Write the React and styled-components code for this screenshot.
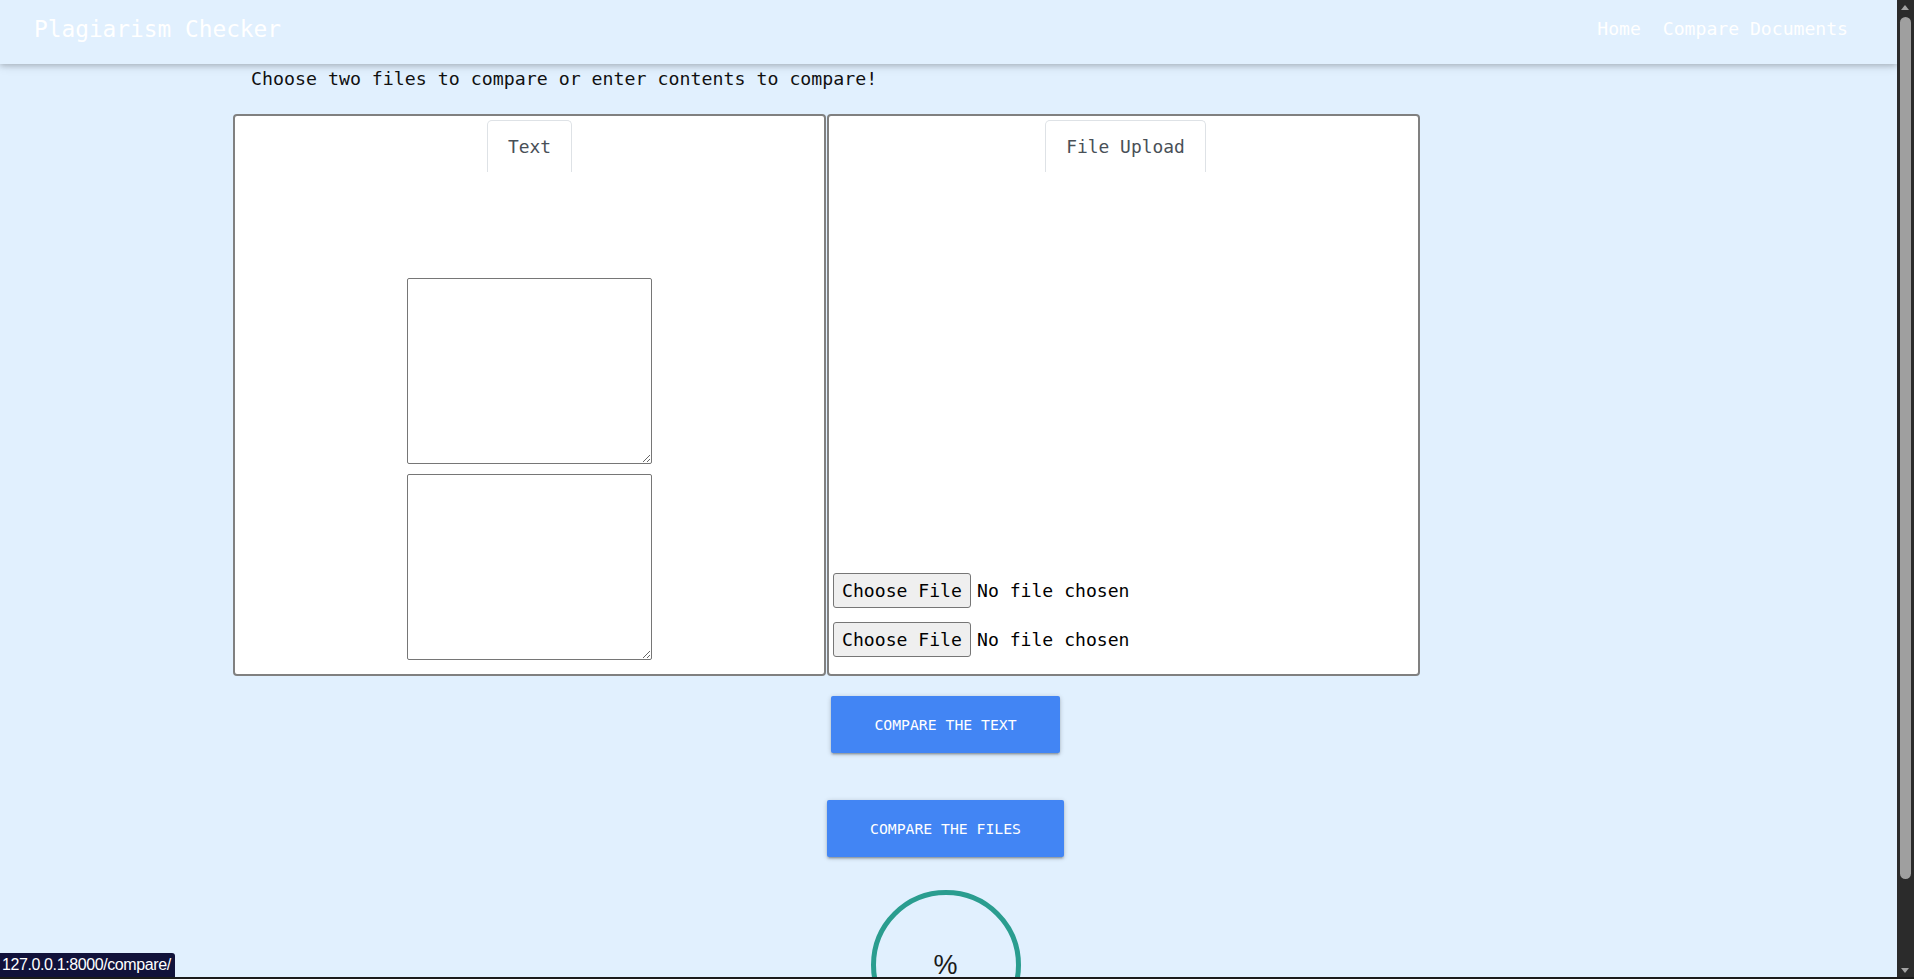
import React from 'react';
import styled, { createGlobalStyle } from 'styled-components';

const GlobalStyle = createGlobalStyle`
    body {
        margin: 0 17px 0 0;
        background: #e1f0fe;
        font-family: "DejaVu Sans Mono", "Liberation Mono", monospace;
        color: #111;
    }
`;

function App() {
    return (
        <>
            <GlobalStyle />
            <Header>
                <Brand>Plagiarism Checker</Brand>
                <Nav>
                    <NavLink href="#">Home</NavLink>
                    <NavLink href="#">Compare Documents</NavLink>
                </Nav>
            </Header>

            <Intro>Choose two files to compare or enter contents to compare!</Intro>

            <Workspace>
                <Panel>
                    <Tab>Text</Tab>
                    <TextBox first />
                    <TextBox />
                </Panel>
                <Panel upload>
                    <Tab>File Upload</Tab>
                    <Spacer />
                    <FileInput type="file" />
                    <FileInput type="file" />
                </Panel>
            </Workspace>

            <Actions>
                <ActionButton>Compare the text</ActionButton>
                <ActionButton>Compare the files</ActionButton>
                <Score>
                    <Percent>%</Percent>
                </Score>
            </Actions>

            {/* browser chrome seen in the screenshot */}
            <ScrollTrack>
                <Arrow up />
                <Thumb />
                <Spacer />
                <Arrow />
            </ScrollTrack>
            <StatusBar>127.0.0.1:8000/compare/</StatusBar>
            <WindowEdge />
        </>
    )
}

export default App

const Header = styled.header`
    position: relative;
    z-index: 1;
    height: 64px;
    box-sizing: border-box;
    padding: 0 49px 0 34px;
    display: flex;
    justify-content: space-between;
    align-items: flex-start;
    background: #e1f0fe;
    box-shadow: 0 2px 5px 0 rgba(0,0,0,.16), 0 2px 10px 0 rgba(0,0,0,.12);
`

const Brand = styled.div`
    margin-top: 16px;
    font-size: 22.8px;
    color: #fff;
`

const Nav = styled.nav`
    margin-top: 18px;
    display: flex;
    gap: 22px;
`

const NavLink = styled.a`
    font-size: 18.1px;
    color: #fff;
    text-decoration: none;
`

const Intro = styled.p`
    margin: 4px 0 24px 251px;
    font-size: 18.25px;
    line-height: 22px;
    color: #111;
`

const Workspace = styled.div`
    display: flex;
    gap: 1px;
    margin-left: 233px;
`

const Panel = styled.section`
    width: 593px;
    height: 562px;
    box-sizing: border-box;
    border: 2px solid #808080;
    border-radius: 4px;
    background: #fff;
    display: flex;
    flex-direction: column;
    align-items: center;
    gap: ${p => p.upload ? '14px' : '0'};
    padding: ${p => p.upload ? '4px 0 17px 4px' : '4px 0 14px'};
`

const Tab = styled.div`
    height: 52px;
    box-sizing: border-box;
    padding: 0 20px;
    display: flex;
    align-items: center;
    border: 1px solid #dee2e6;
    border-bottom: none;
    border-radius: 5px 5px 0 0;
    font-size: 17.9px;
    color: #495057;
`

const TextBox = styled.textarea`
    width: 245px;
    height: 186px;
    box-sizing: border-box;
    margin-top: ${p => p.first ? '106px' : '10px'};
    border: 1px solid #767676;
    border-radius: 2px;
    background: #fff;
`

const Spacer = styled.div`
    flex: 1;
`

const FileInput = styled.input`
    align-self: flex-start;
    width: 330px;
    height: 35px;
    font-family: inherit;
    font-size: 18.1px;
    color: #000;

    &::file-selector-button {
        font: inherit;
        width: 138px;
        height: 35px;
        padding: 0;
        margin: 0 6px 0 0;
        background: #efefef;
        border: 1px solid #767676;
        border-radius: 3px;
        color: #000;
    }
`

const Actions = styled.div`
    display: flex;
    flex-direction: column;
    align-items: center;
    gap: 47px;
    padding: 20px 6px 31px 0;
`

const ActionButton = styled.button`
    height: 57px;
    padding: 0 43px;
    border: none;
    border-radius: 2px;
    background: #4285f4;
    color: #fff;
    font-family: inherit;
    font-size: 14.75px;
    text-transform: uppercase;
    box-shadow: 0 2px 2px 0 rgba(0,0,0,.14), 0 3px 1px -2px rgba(0,0,0,.12), 0 1px 5px 0 rgba(0,0,0,.2);
    cursor: pointer;
`

const Score = styled.div`
    margin-top: -14px;
    width: 150px;
    height: 150px;
    box-sizing: border-box;
    border: 5px solid #2a9d8f;
    border-radius: 50%;
    display: grid;
    place-items: center;
`

const Percent = styled.span`
    font-family: "Liberation Sans", Arial, sans-serif;
    font-size: 27px;
    color: #1a1a1a;
`

const ScrollTrack = styled.div`
    position: fixed;
    top: 0;
    right: 0;
    bottom: 0;
    width: 17px;
    background: #2b2b2b;
    display: flex;
    flex-direction: column;
    align-items: center;
    z-index: 5;
`

const Arrow = styled.div`
    width: 17px;
    height: 17px;
    flex-shrink: 0;
    position: relative;

    &::after {
        content: "";
        position: absolute;
        left: 4px;
        top: ${p => p.up ? '5px' : '6px'};
        border-left: 4.5px solid transparent;
        border-right: 4.5px solid transparent;
        ${p => p.up ? 'border-bottom: 5px solid #a3a3a3;' : 'border-top: 5px solid #a3a3a3;'}
    }
`

const Thumb = styled.div`
    width: 11px;
    height: 862px;
    flex-shrink: 0;
    border-radius: 6px;
    background: #9f9f9f;
`

const StatusBar = styled.div`
    position: fixed;
    left: 0;
    bottom: 2px;
    height: 24px;
    padding: 0 4px 0 2px;
    display: flex;
    align-items: center;
    background: #11123a;
    border-top-right-radius: 3px;
    color: #fff;
    font-family: "Liberation Sans Narrow", "Liberation Sans", sans-serif;
    font-size: 16px;
    letter-spacing: -0.4px;
    z-index: 6;
`

const WindowEdge = styled.div`
    position: fixed;
    left: 0;
    right: 0;
    bottom: 0;
    height: 2px;
    background: #1b1b1b;
    z-index: 7;
`
